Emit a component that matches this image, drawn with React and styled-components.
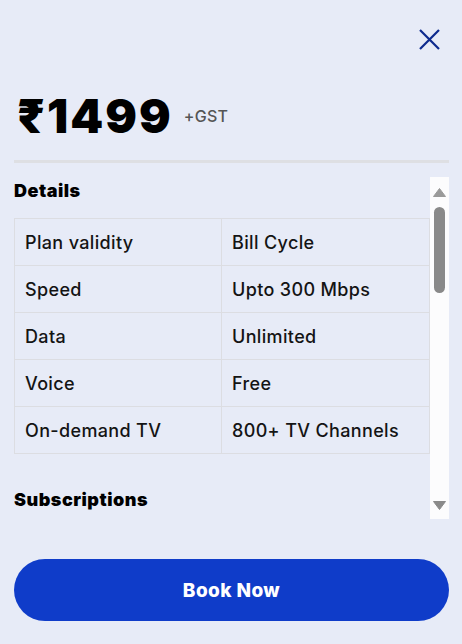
import React from "react";
import styled, { createGlobalStyle } from "styled-components";

const Global = createGlobalStyle`
  html, body { margin: 0; padding: 0; background: #e7ebf7; }
  body { font-family: Inter, "Noto Sans", "DejaVu Sans", sans-serif; }
  * { box-sizing: border-box; }
`;

const Page = styled.div`
  width: 462px;
  height: 644px;
  display: flex;
  flex-direction: column;
  padding: 19px 13px 0 14px;
  background: #e7ebf7;
`;

const Header = styled.div`
  display: flex;
  justify-content: flex-end;
`;

const CloseButton = styled.button`
  width: 40px;
  height: 40px;
  border: none;
  background: transparent;
  padding: 0;
  display: flex;
  align-items: center;
  justify-content: center;
  color: #0d2a8e;
  cursor: pointer;
`;

const PriceRow = styled.div`
  margin-top: 33px;
  display: flex;
  align-items: center;
  gap: 11px;
  padding-left: 3px;
`;

const Price = styled.div`
  font-size: 47px;
  line-height: 47px;
  font-weight: 900;
  color: #000;
  letter-spacing: 2px;
`;

const Tax = styled.span`
  font-size: 16px;
  font-weight: 500;
  color: #555;
  line-height: 1;
  letter-spacing: 0.3px;
`;

const Divider = styled.div`
  margin-top: 21px;
  height: 3px;
  background: #dedfe3;
`;

const ScrollArea = styled.div`
  margin-top: 14px;
  height: 342px;
  display: flex;
`;

const ScrollContent = styled.div`
  flex: 1;
  overflow: hidden;
  padding-top: 2px;
`;

const Heading = styled.h3`
  margin: 0;
  font-size: 18px;
  line-height: 24px;
  font-weight: 900;
  color: #000;
  letter-spacing: 0.5px;
  margin-top: ${(p) => p.$top || 0}px;
`;

const Table = styled.div`
  margin-top: 15px;
  display: grid;
  grid-template-columns: 207px 1fr;
  border-top: 1px solid #dcdde2;
  border-left: 1px solid #dcdde2;
`;

const Cell = styled.div`
  height: 47px;
  display: flex;
  align-items: center;
  padding-left: 10px;
  padding-top: 1px;
  border-right: 1px solid #dcdde2;
  border-bottom: 1px solid #dcdde2;
  font-size: 18px;
  font-weight: 500;
  color: #141414;
  letter-spacing: 0.35px;
`;

const ScrollTrack = styled.div`
  width: 19px;
  background: #fcfcfd;
  display: flex;
  flex-direction: column;
  align-items: center;
  padding: 11px 0 9px;
`;

const Thumb = styled.div`
  margin-top: 10px;
  width: 11px;
  height: 86px;
  border-radius: 6px;
  background: #898989;
`;

const Spacer = styled.div`
  flex: 1;
`;

const Arrow = ({ down }) => (
  <svg width="13" height="9" viewBox="0 0 13 9">
    <polygon
      points={down ? "0.5,0.5 12.5,0.5 6.5,8.5" : "6.5,0.5 12.5,8.5 0.5,8.5"}
      fill={down ? "#8a8a8a" : "#9a9a9a"}
      strokeLinejoin="round"
      stroke={down ? "#8a8a8a" : "#9a9a9a"}
      strokeWidth="1"
    />
  </svg>
);

const BookButton = styled.button`
  margin-top: 40px;
  height: 62px;
  width: 100%;
  border: none;
  border-radius: 31px;
  background: #0f3cc9;
  color: #fff;
  font-family: Inter, "Noto Sans", sans-serif;
  font-size: 19px;
  font-weight: 800;
  letter-spacing: 0.4px;
  cursor: pointer;
`;

const rows = [
  ["Plan validity", "Bill Cycle"],
  ["Speed", "Upto 300 Mbps"],
  ["Data", "Unlimited"],
  ["Voice", "Free"],
  ["On-demand TV", "800+ TV Channels"],
];

export default function App() {
  return (
    <>
      <Global />
      <Page>
        <Header>
          <CloseButton aria-label="Close">
            <svg width="21" height="21" viewBox="0 0 21 21">
              <path d="M1 1 L20 20 M20 1 L1 20" stroke="currentColor" strokeWidth="2.2" fill="none" />
            </svg>
          </CloseButton>
        </Header>
        <PriceRow>
          <Price>₹1499</Price>
          <Tax>+GST</Tax>
        </PriceRow>
        <Divider />
        <ScrollArea>
          <ScrollContent>
            <Heading>Details</Heading>
            <Table>
              {rows.map(([k, v]) => (
                <React.Fragment key={k}>
                  <Cell>{k}</Cell>
                  <Cell>{v}</Cell>
                </React.Fragment>
              ))}
            </Table>
            <Heading $top={34}>Subscriptions</Heading>
          </ScrollContent>
          <ScrollTrack>
            <Arrow />
            <Thumb />
            <Spacer />
            <Arrow down />
          </ScrollTrack>
        </ScrollArea>
        <BookButton>Book Now</BookButton>
      </Page>
    </>
  );
}
